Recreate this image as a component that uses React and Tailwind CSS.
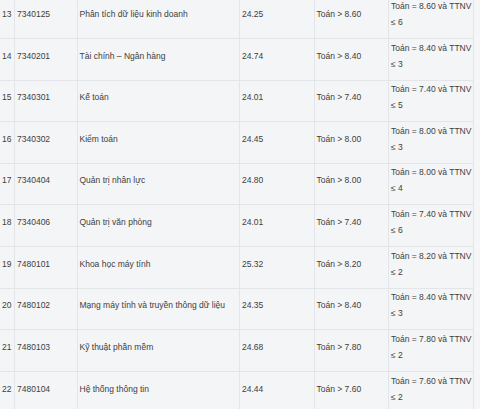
import React from 'react';

const rows = [
  ['13', '7340125', 'Phân tích dữ liệu kinh doanh', '24.25', 'Toán > 8.60', 'Toán = 8.60 và TTNV', '≤ 6'],
  ['14', '7340201', 'Tài chính – Ngân hàng', '24.74', 'Toán > 8.40', 'Toán = 8.40 và TTNV', '≤ 3'],
  ['15', '7340301', 'Kế toán', '24.01', 'Toán > 7.40', 'Toán = 7.40 và TTNV', '≤ 5'],
  ['16', '7340302', 'Kiểm toán', '24.45', 'Toán > 8.00', 'Toán = 8.00 và TTNV', '≤ 3'],
  ['17', '7340404', 'Quản trị nhân lực', '24.80', 'Toán > 8.00', 'Toán = 8.00 và TTNV', '≤ 4'],
  ['18', '7340406', 'Quản trị văn phòng', '24.01', 'Toán > 7.40', 'Toán = 7.40 và TTNV', '≤ 6'],
  ['19', '7480101', 'Khoa học máy tính', '25.32', 'Toán > 8.20', 'Toán = 8.20 và TTNV', '≤ 2'],
  ['20', '7480102', 'Mạng máy tính và truyền thông dữ liệu', '24.35', 'Toán > 8.40', 'Toán = 8.40 và TTNV', '≤ 3'],
  ['21', '7480103', 'Kỹ thuật phần mềm', '24.68', 'Toán > 7.80', 'Toán = 7.80 và TTNV', '≤ 2'],
  ['22', '7480104', 'Hệ thống thông tin', '24.44', 'Toán > 7.60', 'Toán = 7.60 và TTNV', '≤ 2'],
];

export default function App() {
  return (
    <div className="w-[480px] h-[409px] overflow-hidden bg-[#f4f5f7] flex font-['Liberation_Sans',Arial,sans-serif] text-[8.5px] text-[#404040]">
      <table className="-mt-[3.6px] w-[473px] table-fixed border-collapse self-start">
        <colgroup>
          <col className="w-[14px]" />
          <col className="w-[63px]" />
          <col className="w-[162px]" />
          <col className="w-[75px]" />
          <col className="w-[74px]" />
          <col className="w-[85px]" />
        </colgroup>
        <tbody>
          {rows.map(r => (
            <tr key={r[0]} className="h-[41.6px] border-t border-[#e3e5e9]">
              <td className="pl-[2px] pt-[0.5px] pb-[8px] align-middle leading-[16px] whitespace-nowrap">{r[0]}</td>
              <td className="pl-[2.5px] pt-[0.5px] pb-[8px] align-middle leading-[16px] border-l border-[#e3e5e9]">{r[1]}</td>
              <td className="pl-[2px] pt-[0.5px] pb-[8px] align-middle leading-[16px] border-l border-[#e3e5e9] whitespace-nowrap">{r[2]}</td>
              <td className="pl-[2.5px] pt-[0.5px] pb-[8px] align-middle leading-[16px] border-l border-[#e3e5e9]">{r[3]}</td>
              <td className="pl-[2px] pt-[0.5px] pb-[8px] align-middle leading-[16px] border-l border-[#e3e5e9]">{r[4]}</td>
              <td className="pl-[2.5px] pt-[0.5px] pb-[8px] align-middle leading-[16px] border-l border-r border-[#e3e5e9] whitespace-nowrap">
                <div>{r[5]}</div>
                <div>{r[6]}</div>
              </td>
            </tr>
          ))}
        </tbody>
      </table>
      <div className="flex-1 bg-[#f6f6f8]" />
    </div>
  );
}
